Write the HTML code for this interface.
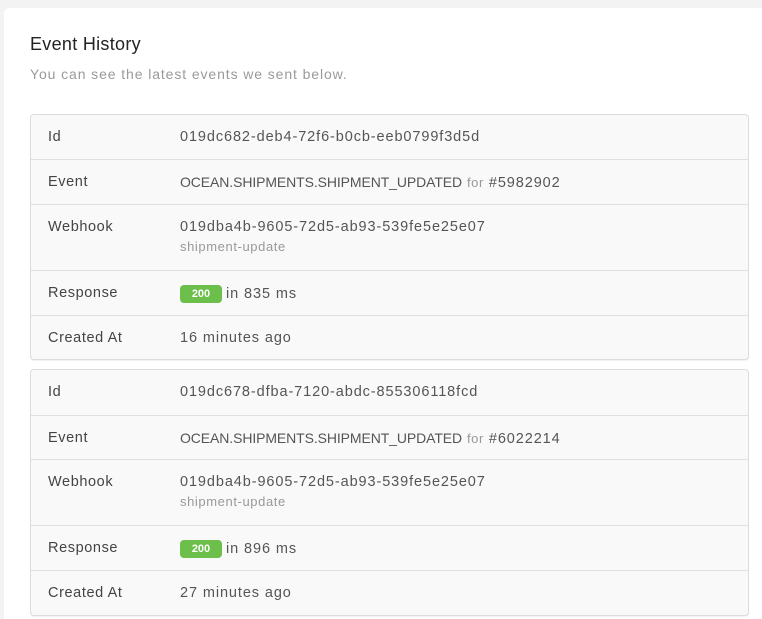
<!DOCTYPE html>
<html><head><style>
html,body{margin:0;height:619px;overflow:hidden}
body{background:#f3f3f3;font-family:"Liberation Sans",sans-serif;width:762px;position:relative}
.card{position:absolute;left:4px;top:8px;width:770px;height:640px;background:#fff;border-radius:6px}
h1{position:absolute;left:26px;top:26px;margin:0;font-size:18px;font-weight:normal;color:#222;letter-spacing:0.3px}
.sub{position:absolute;left:26px;top:58px;font-size:14px;color:#9a9a9a;letter-spacing:0.9px}
.t{position:absolute;left:26px;width:717px;border:1px solid #dcdcdc;border-radius:4px;background:#f9f9f9;box-shadow:0 1px 1px rgba(0,0,0,.06)}
.r{display:flex;border-top:1px solid #e0e0e0;font-size:14.5px;color:#555;align-items:flex-start;box-sizing:border-box;letter-spacing:0.9px;padding-top:14px!important}
.r:first-child{border-top:none}
.l{width:132px;padding-left:17px;color:#444;letter-spacing:0.6px}
.v{color:#555}
.u{font-size:14px;letter-spacing:-0.1px}
.m{color:#999;font-size:13px;letter-spacing:0.6px}
.b{display:inline-block;background:#6cbf4b;color:#fff;font-size:11px;font-weight:bold;border-radius:4px;padding:3px 0;width:42px;text-align:center;margin-right:4px;vertical-align:1px;letter-spacing:0}
</style></head><body>
<div class="card">
<h1>Event History</h1>
<div class="sub">You can see the latest events we sent below.</div>
<div class="t" style="top:106px">
<div class="r" style="height:44px"><div class="l">Id</div><div class="v">019dc682-deb4-72f6-b0cb-eeb0799f3d5d</div></div>
<div class="r" style="height:45px"><div class="l">Event</div><div class="v"><span class="u">OCEAN.SHIPMENTS.SHIPMENT_UPDATED</span> <span class="m">for</span> #5982902</div></div>
<div class="r" style="height:66px"><div class="l">Webhook</div><div class="v">019dba4b-9605-72d5-ab93-539fe5e25e07<br><span class="m" style="line-height:24px">shipment-update</span></div></div>
<div class="r" style="height:45px"><div class="l">Response</div><div class="v"><span class="b">200</span>in 835 ms</div></div>
<div class="r" style="height:44px"><div class="l">Created At</div><div class="v">16 minutes ago</div></div>
</div>
<div class="t" style="top:361px">
<div class="r" style="height:45px"><div class="l">Id</div><div class="v">019dc678-dfba-7120-abdc-855306118fcd</div></div>
<div class="r" style="height:44px"><div class="l">Event</div><div class="v"><span class="u">OCEAN.SHIPMENTS.SHIPMENT_UPDATED</span> <span class="m">for</span> #6022214</div></div>
<div class="r" style="height:66px"><div class="l">Webhook</div><div class="v">019dba4b-9605-72d5-ab93-539fe5e25e07<br><span class="m" style="line-height:24px">shipment-update</span></div></div>
<div class="r" style="height:45px"><div class="l">Response</div><div class="v"><span class="b">200</span>in 896 ms</div></div>
<div class="r" style="height:45px"><div class="l">Created At</div><div class="v">27 minutes ago</div></div>
</div>
</div>
</body></html>
